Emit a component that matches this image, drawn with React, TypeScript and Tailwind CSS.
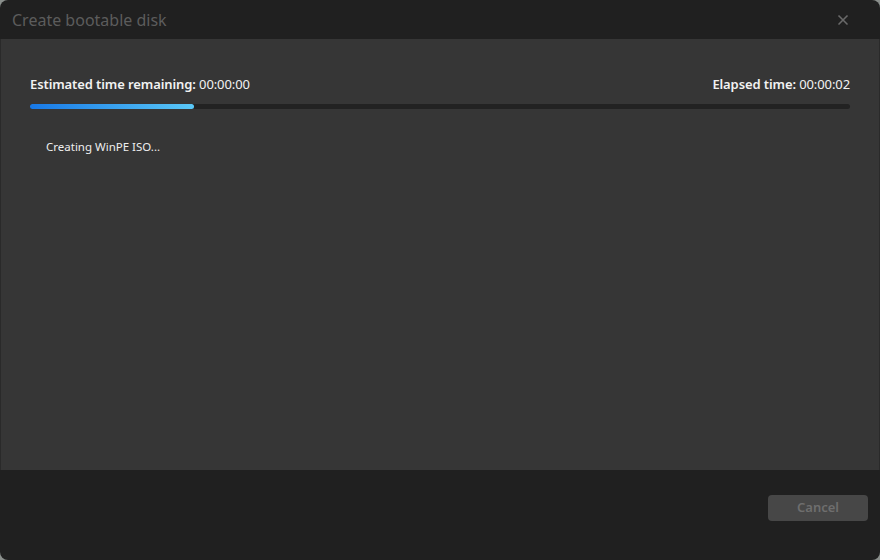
import { X } from "lucide-react";

export default function App() {
  const font = { fontFamily: '"Segoe UI", "Noto Sans", "Open Sans", sans-serif' };
  return (
    <div className="w-[880px] h-[560px] bg-[#8a8f8c]" style={font}>
      <div className="flex flex-col w-full h-full rounded-[8px] overflow-hidden bg-[#202020]">
        {/* title bar */}
        <div className="flex items-center justify-between h-[39px] pl-3 pr-[29px] shrink-0">
          <span className="text-[16px] text-[#5c5c5c] mt-[1px]">Create bootable disk</span>
          <X size={16} strokeWidth={2.5} className="text-[#6a6a6a]" />
        </div>

        {/* body */}
        <div className="flex-1 bg-[#363636] border-x border-[#2a2a2a] pt-[35px] px-[29px]">
          <div className="flex items-center justify-between text-[13px] text-[#f2f2f2] h-[22px]">
            <span className="tracking-[-0.1px]">
              <span className="font-semibold">Estimated time remaining:</span> 00:00:00
            </span>
            <span className="tracking-[-0.1px]">
              <span className="font-semibold">Elapsed time:</span> 00:00:02
            </span>
          </div>
          <div className="mt-[8px] h-[5px] rounded-full bg-[#222222]">
            <div className="h-full w-[20%] rounded-full bg-gradient-to-r from-[#1878e6] to-[#5ac8f7]" />
          </div>
          <div className="mt-[29px] pl-[16px] text-[11.5px] text-[#eeeeee]">Creating WinPE ISO...</div>
        </div>

        {/* footer */}
        <div className="flex items-start justify-end h-[90px] shrink-0 pt-[25px] pr-[12px]">
          <button className="w-[100px] h-[26px] rounded-[4px] bg-[#474747] text-[13px] font-semibold text-[#6e6e6e]">
            Cancel
          </button>
        </div>
      </div>
    </div>
  );
}
